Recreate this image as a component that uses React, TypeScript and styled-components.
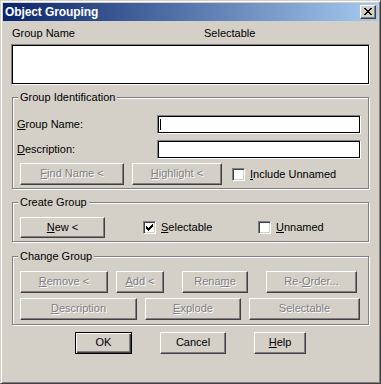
import React from 'react'
import styled, { createGlobalStyle, css } from 'styled-components'

const ui = "'Liberation Sans', Arial, sans-serif"
const face = '#d4d0c8'
const shadow = '#808080'
const darkShadow = '#404040'

const GlobalStyle = createGlobalStyle`
  html, body {
    margin: 0;
    padding: 0;
    background: ${face};
  }
  * {
    box-sizing: border-box;
  }
`

const Window = styled.div`
  width: 381px;
  height: 384px;
  background: ${face};
  border: 1px solid;
  border-color: ${face} ${darkShadow} ${darkShadow} ${face};
  box-shadow: inset 1px 1px 0 #fff, inset -1px -1px 0 ${shadow};
  padding: 2px;
  font-family: ${ui};
  font-size: 11px;
  line-height: 13px;
  color: #000;
`

const TitleBar = styled.div`
  height: 18px;
  display: flex;
  align-items: center;
  justify-content: space-between;
  padding: 0 2px 0 2px;
  background: linear-gradient(to right, #0a246a, #a6caf0);
`

const Title = styled.span`
  font-weight: bold;
  font-size: 12px;
  color: #fff;
  letter-spacing: -0.1px;
`

const CloseButton = styled.div`
  width: 16px;
  height: 14px;
  display: flex;
  align-items: center;
  justify-content: center;
  padding: 0 1px 1px 0;
  background: ${face};
  border: 1px solid;
  border-color: #fff ${darkShadow} ${darkShadow} #fff;
  box-shadow: inset -1px -1px 0 ${shadow};
`

const Body = styled.div`
  padding: 0 8px;
`

const HeaderRow = styled.div`
  margin: 6px 0 0 1px;
  display: grid;
  grid-template-columns: 192px auto;
`

const ListBox = styled.div`
  margin-top: 4px;
  height: 41px;
  background: #fff;
  border: 1px solid;
  border-color: ${shadow} #fff #fff ${shadow};
  box-shadow: inset 1px 1px 0 #000, inset -1px -1px 0 #000;
`

const GroupBox = styled.fieldset<{ $top: number; $pt: number; $pb: number }>`
  margin: ${(p) => p.$top}px 1px 0 1px;
  padding: ${(p) => p.$pt}px 6px ${(p) => p.$pb}px 7px;
  border: 1px solid ${shadow};
  box-shadow: 1px 1px 0 #fff, inset 1px 1px 0 #fff;
  min-width: 0;
`

const Legend = styled.legend`
  margin-left: -2px;
  padding: 0 2px;
  background: ${face};
  line-height: 13px;
`

const FieldRow = styled.div<{ $gap?: number }>`
  display: flex;
  align-items: center;
  height: 19px;
  margin-top: ${(p) => p.$gap ?? 0}px;
`

const FieldLabel = styled.span`
  width: 140px;
  margin-left: -3px;
`

const EditBox = styled.div`
  width: 204px;
  height: 19px;
  background: #fff;
  border: 1px solid;
  border-color: ${shadow} #fff #fff ${shadow};
  box-shadow: inset 1px 1px 0 #000, inset -1px -1px 0 #000;
  padding: 3px 2px;
`

const Caret = styled.div`
  width: 1px;
  height: 11px;
  background: #000;
`

const ButtonRow = styled.div<{ $gap: number; $top?: number }>`
  display: flex;
  align-items: center;
  gap: ${(p) => p.$gap}px;
  margin-top: ${(p) => p.$top ?? 0}px;
`

const CreateRow = styled.div`
  display: grid;
  grid-template-columns: 123px 115px auto;
  align-items: center;
`

const Button = styled.div<{
  $w: number
  $h?: number
  $ml?: number
  $disabled?: boolean
  $default?: boolean
}>`
  width: ${(p) => p.$w}px;
  height: ${(p) => p.$h ?? 22}px;
  margin-left: ${(p) => p.$ml ?? 0}px;
  display: flex;
  align-items: center;
  justify-content: center;
  background: ${face};
  white-space: nowrap;
  border: 1px solid;
  border-color: #fff ${darkShadow} ${darkShadow} #fff;
  box-shadow: inset -1px -1px 0 ${shadow};
  padding-bottom: 1px;
  ${(p) =>
    p.$disabled &&
    css`
      color: ${shadow};
      text-shadow: 1px 1px 0 #fff;
    `}
  ${(p) =>
    p.$default &&
    css`
      border-color: #000;
      box-shadow: inset 1px 1px 0 #fff, inset -1px -1px 0 ${darkShadow},
        inset -2px -2px 0 ${shadow};
    `}
`

const CheckItem = styled.div<{ $left?: number }>`
  display: flex;
  align-items: center;
  gap: 5px;
  margin-left: ${(p) => p.$left ?? 0}px;
`

const CheckBox = styled.div`
  width: 13px;
  height: 13px;
  display: flex;
  align-items: center;
  justify-content: center;
  background: #fff;
  border: 1px solid;
  border-color: ${shadow} #fff #fff ${shadow};
  box-shadow: inset 1px 1px 0 ${darkShadow}, inset -1px -1px 0 ${face};
`

const Footer = styled.div`
  margin-top: 7px;
  display: flex;
  justify-content: center;
  gap: 28px;
`

const CLOSE_PIXELS = ['11000011', '01100110', '00111100', '00011000', '00111100', '01100110', '11000011']
const CHECK_PIXELS = ['0000001', '0000011', '1000111', '1101110', '1111100', '0111000', '0010000']

function PixelGlyph({ rows }: { rows: string[] }) {
  const w = rows[0].length
  const h = rows.length
  return (
    <svg width={w} height={h} viewBox={`0 0 ${w} ${h}`} shapeRendering="crispEdges">
      {rows.flatMap((row, y) =>
        row.split('').map((c, x) => (c === '1' ? <rect key={`${x}-${y}`} x={x} y={y} width={1} height={1} fill="#000" /> : null))
      )}
    </svg>
  )
}

function Check({ label, checked, left }: { label: React.ReactNode; checked?: boolean; left?: number }) {
  return (
    <CheckItem $left={left}>
      <CheckBox>{checked && <PixelGlyph rows={CHECK_PIXELS} />}</CheckBox>
      <span>{label}</span>
    </CheckItem>
  )
}

export default function App() {
  return (
    <>
      <GlobalStyle />
      <Window>
        <TitleBar>
          <Title>Object Grouping</Title>
          <CloseButton>
            <PixelGlyph rows={CLOSE_PIXELS} />
          </CloseButton>
        </TitleBar>
        <Body>
          <HeaderRow>
            <span>Group Name</span>
            <span>Selectable</span>
          </HeaderRow>
          <ListBox />

          <GroupBox $top={6} $pt={11} $pb={3}>
            <Legend>Group Identification</Legend>
            <FieldRow>
              <FieldLabel>
                <u>G</u>roup Name:
              </FieldLabel>
              <EditBox>
                <Caret />
              </EditBox>
            </FieldRow>
            <FieldRow $gap={6}>
              <FieldLabel>
                <u>D</u>escription:
              </FieldLabel>
              <EditBox />
            </FieldRow>
            <ButtonRow $gap={8} $top={4}>
              <Button $w={104} $disabled>
                <span>
                  <u>F</u>ind Name &lt;
                </span>
              </Button>
              <Button $w={90} $disabled>
                <span>
                  <u>H</u>ighlight &lt;
                </span>
              </Button>
              <Check
                left={2}
                label={
                  <>
                    <u>I</u>nclude Unnamed
                  </>
                }
              />
            </ButtonRow>
          </GroupBox>

          <GroupBox $top={7} $pt={8} $pb={3}>
            <Legend>Create Group</Legend>
            <CreateRow>
              <Button $w={85} $h={21}>
                <span>
                  <u>N</u>ew &lt;
                </span>
              </Button>
              <Check
                checked
                label={
                  <>
                    <u>S</u>electable
                  </>
                }
              />
              <Check
                label={
                  <>
                    <u>U</u>nnamed
                  </>
                }
              />
            </CreateRow>
          </GroupBox>

          <GroupBox $top={8} $pt={8} $pb={4}>
            <Legend>Change Group</Legend>
            <ButtonRow $gap={8}>
              <Button $w={88} $disabled>
                <span>
                  <u>R</u>emove &lt;
                </span>
              </Button>
              <Button $w={48} $disabled>
                <span>
                  <u>A</u>dd &lt;
                </span>
              </Button>
              <Button $w={66} $ml={10} $disabled>
                <span>
                  Rena<u>m</u>e
                </span>
              </Button>
              <Button $w={91} $ml={10} $disabled>
                <span>
                  Re-<u>O</u>rder...
                </span>
              </Button>
            </ButtonRow>
            <ButtonRow $gap={8} $top={5}>
              <Button $w={117} $disabled>
                <span>
                  <u>D</u>escription
                </span>
              </Button>
              <Button $w={96} $disabled>
                <span>
                  <u>E</u>xplode
                </span>
              </Button>
              <Button $w={111} $disabled>
                <span>Selectable</span>
              </Button>
            </ButtonRow>
          </GroupBox>

          <Footer>
            <Button $w={57} $default>
              OK
            </Button>
            <Button $w={66}>Cancel</Button>
            <Button $w={52}>
              <span>
                <u>H</u>elp
              </span>
            </Button>
          </Footer>
        </Body>
      </Window>
    </>
  )
}
